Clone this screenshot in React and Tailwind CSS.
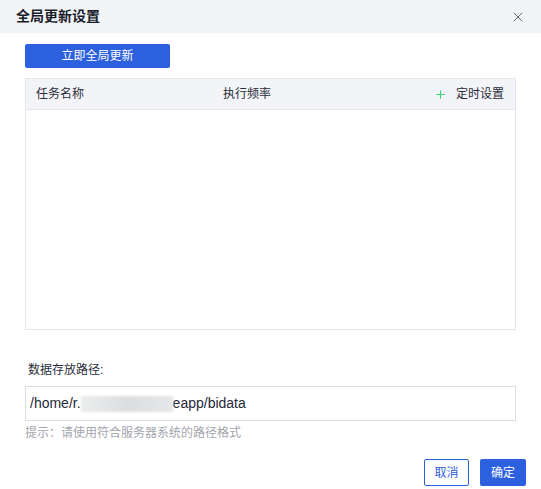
import { X, Plus } from 'lucide-react';

const App = () => {
  return (
    <div
      className="w-[541px] h-[489px] bg-white text-[#1f2330] overflow-hidden"
      style={{ fontFamily: '"Liberation Sans", "Noto Sans CJK SC", sans-serif' }}
    >
      {/* Header */}
      <div className="h-[33px] bg-[#f3f4f7] flex items-center justify-between pl-[16px] pr-[15px]">
        <span className="text-[14px] font-semibold text-[#1a1d2b]">全局更新设置</span>
        <X className="w-[16px] h-[16px] text-[#555]" strokeWidth={1.3} />
      </div>

      <div className="px-[25px] pt-[11px]">
        <button className="w-[145px] h-[24px] bg-[#2c60de] rounded-[2px] text-white text-[12px] flex items-center justify-center">
          立即全局更新
        </button>

        {/* Table */}
        <div className="mt-[10px] w-[491px] h-[252px] border border-[#e4e6eb] flex flex-col">
          <div className="h-[31px] bg-[#f3f4f7] border-b border-[#e4e6eb] flex items-center text-[12px] text-[#2a2e3b]">
            <span className="pl-[10px] w-[197px]">任务名称</span>
            <span className="flex-1">执行频率</span>
            <span className="flex items-center pr-[11px]">
              <Plus className="w-[13px] h-[13px] text-[#3cd07e] mr-[9px]" strokeWidth={2} />
              定时设置
            </span>
          </div>
          <div className="flex-1" />
        </div>

        <div className="mt-[31px] pl-[3px] text-[12px] text-[#2a2e3b]">数据存放路径:</div>

        <div className="mt-[7px] w-[491px] h-[35px] border border-[#dcdee5] flex items-center pl-[4px] text-[14px] text-[#252838]">
          <span>/home/r.</span>
          <span className="inline-block w-[92px] h-[16px] bg-gradient-to-r from-[#eceded] via-[#dcdddf] to-[#e6e7e8] blur-[1px]" />
          <span>eapp/bidata</span>
        </div>

        <div className="mt-[3px] text-[12px] text-[#a2a5ad]">提示：请使用符合服务器系统的路径格式</div>

        <div className="mt-[17px] flex justify-end gap-[11px] mr-[-10px]">
          <button className="w-[45px] h-[27px] border border-[#2c60de] rounded-[2px] text-[#2c60de] text-[12px] bg-white">
            取消
          </button>
          <button className="w-[46px] h-[27px] bg-[#2c60de] rounded-[2px] text-white text-[12px]">
            确定
          </button>
        </div>
      </div>
    </div>
  );
};

export default App;
